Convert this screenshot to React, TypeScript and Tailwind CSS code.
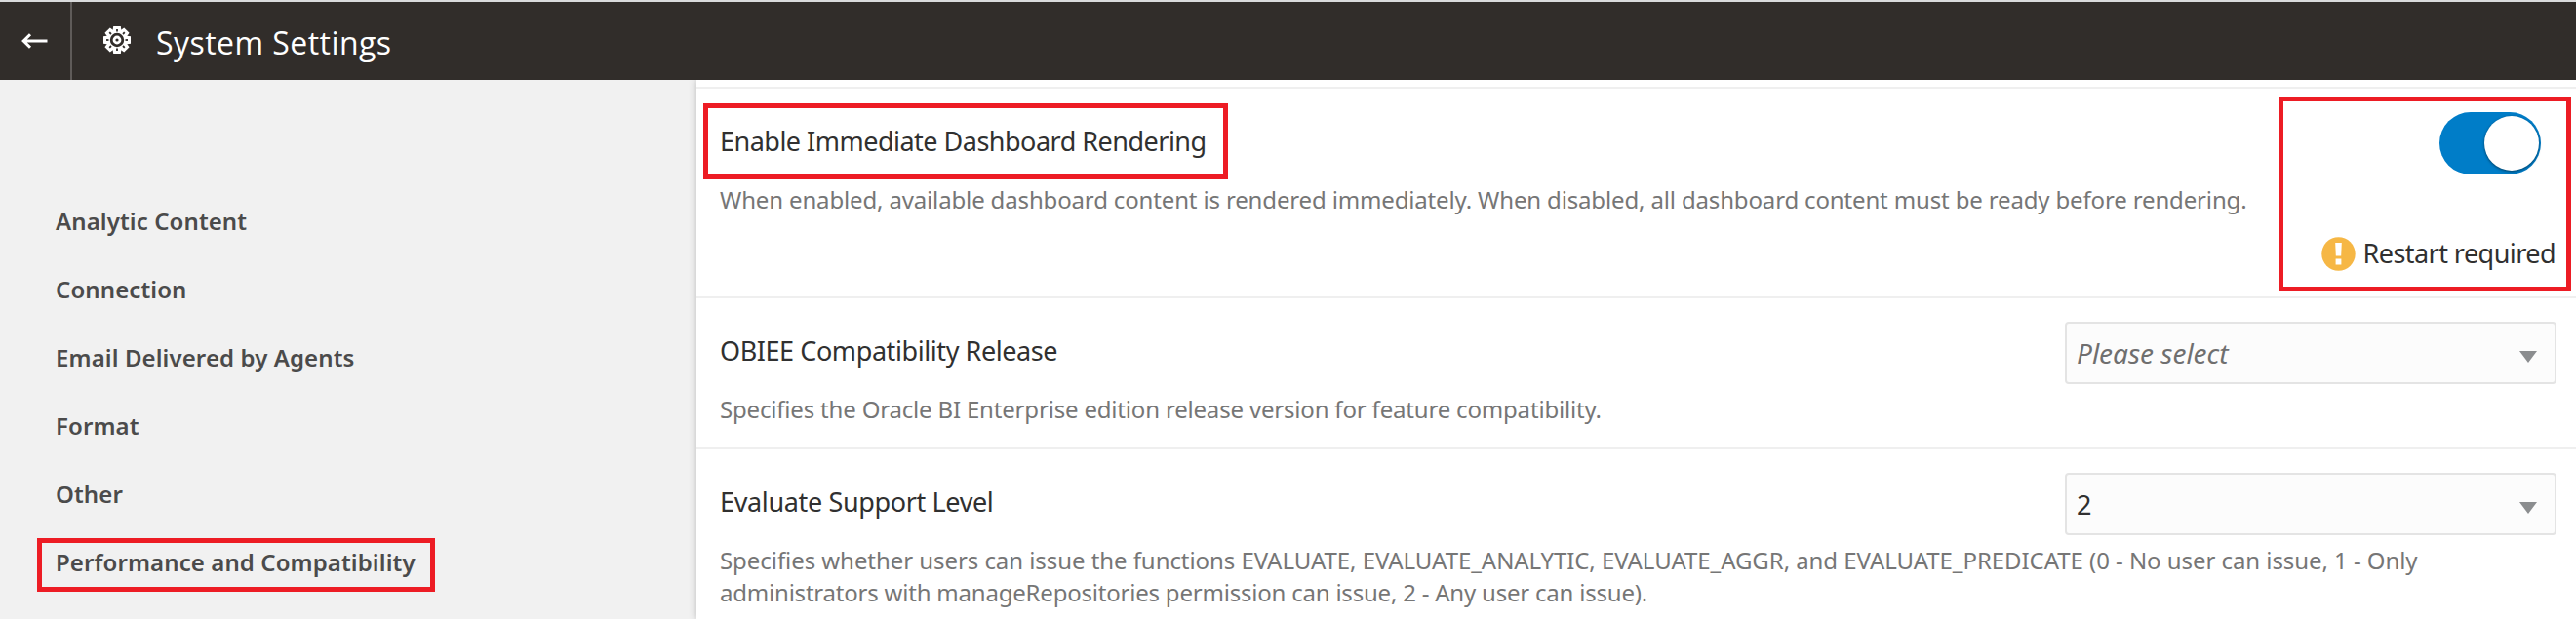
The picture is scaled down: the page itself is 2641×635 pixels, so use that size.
import type { ReactNode } from "react";

function Highlight({ className }: { className: string }) {
  return <div className={`pointer-events-none absolute border-[5px] border-[#ed1c24] ${className}`} />;
}

function Gear() {
  const angles = [0, 45, 90, 135, 180, 225, 270, 315];
  return (
    <svg className="h-7 w-7" viewBox="-14 -14 28 28" fill="none">
      {angles.map((a) => (
        <path key={a} d="M-4.6 -8.5 L-3.8 -14 H3.8 L4.6 -8.5 Z" fill="#fff" transform={`rotate(${a})`} />
      ))}
      <circle r="9" stroke="#fff" strokeWidth="3.6" />
      {angles.map((a) => (
        <path key={a} d="M-0.9 -11 H0.9 V-8.5 H-0.9 Z" fill="#312d2a" transform={`rotate(${a})`} />
      ))}
      <circle r="3" stroke="#fff" strokeWidth="2.8" />
    </svg>
  );
}

function Header() {
  return (
    <header className="flex h-[82px] shrink-0 border-t-2 border-[#d9dadb] bg-[#312d2a] text-white">
      <button className="flex w-[74px] items-center border-r-2 border-[#5f5b59] pl-[22px]">
        <svg className="h-4 w-[27px]" viewBox="0 0 27 16" fill="none" stroke="#fff" strokeWidth="3">
          <path d="M2 8H26.5M9 1.2L2.2 8L9 14.8" />
        </svg>
      </button>
      <div className="flex items-center pl-8">
        <div className="pb-0.5">
          <Gear />
        </div>
        <h1 className="pl-[26px] pt-[3px] font-['Open_Sans',sans-serif] text-[32px] leading-10 tracking-[0.45px]">System Settings</h1>
      </div>
    </header>
  );
}

const categories = ["Analytic Content", "Connection", "Email Delivered by Agents", "Format", "Other", "Performance and Compatibility"];

function Sidebar() {
  return (
    <nav className="relative w-[714px] shrink-0 bg-[#f1f1f1] pl-[57px] pt-[110px]">
      {categories.map((name) => (
        <div key={name} className="h-[70px] text-2xl leading-[70px] font-semibold tracking-[0.1px] text-[#4b4b4b]">
          {name}
        </div>
      ))}
      <Highlight className="left-[38px] top-[470px] h-[55px] w-[408px]" />
    </nav>
  );
}

function Setting({ title, titleClass, lines, height, children }: {
  title: string;
  titleClass: string;
  lines: { text: string; className: string }[];
  height: string;
  children: ReactNode;
}) {
  return (
    <section className={`relative flex justify-between border-t-2 border-[#efefef] pl-6 pr-5 ${height}`}>
      <div className="w-0 pt-9 whitespace-nowrap">
        <h2 className={`text-[27px] leading-9 text-[#303030] ${titleClass}`}>{title}</h2>
        <div className="mt-[25px] text-2xl leading-[33px] text-[#767676]">
          {lines.map((l) => (
            <p key={l.text} className={l.className}>{l.text}</p>
          ))}
        </div>
      </div>
      {children}
    </section>
  );
}

function Select({ children }: { children: ReactNode }) {
  return (
    <div className="mt-6 flex h-16 w-[504px] items-center justify-between rounded border-2 border-[#e4e4e4] bg-[#fcfcfc] pr-[18px] pl-2.5">
      {children}
      <svg className="mt-2 h-3 w-[18px]" viewBox="0 0 18 12">
        <path d="M0 0H18L9 12Z" fill="#8b8d8f" />
      </svg>
    </div>
  );
}

export default function App() {
  return (
    <div className="flex h-[635px] w-[2641px] flex-col overflow-hidden bg-white font-['Noto_Sans',sans-serif]">
      <Header />
      <div className="flex min-h-0 flex-1">
        <Sidebar />
        <main className="relative flex-1 bg-white pt-[7px] shadow-[-1px_0_7px_rgba(0,0,0,0.18)] [clip-path:inset(0_0_0_-12px)]">
          <Setting
            title="Enable Immediate Dashboard Rendering"
            titleClass="tracking-[-0.51px]"
            height="h-[215px]"
            lines={[{
              text: "When enabled, available dashboard content is rendered immediately. When disabled, all dashboard content must be ready before rendering.",
              className: "tracking-[-0.15px]",
            }]}
          >
            <div className="flex flex-col items-end">
              <div className="mt-6 mr-4 flex h-16 w-[104px] items-center justify-end rounded-full bg-[#007dc8] pr-0.5">
                <div className="h-14 w-14 rounded-full bg-white shadow-[0_1px_3px_rgba(0,0,0,0.5)]" />
              </div>
              <div className="mt-[63px] mr-px flex items-center">
                <svg className="h-[35px] w-[35px]" viewBox="0 0 35 35">
                  <circle cx="17.5" cy="17.5" r="17.2" fill="#f6b745" />
                  <path d="M14.2 6H20.8L20.2 19.5H14.8ZM14.6 22.5H20.4V28.5H14.6Z" fill="#fff" />
                </svg>
                <span className="ml-[7px] text-[27px] leading-9 tracking-[-0.55px] text-[#303030]">Restart required</span>
              </div>
            </div>
            <Highlight className="left-[7px] top-[15px] h-[78px] w-[538px]" />
            <Highlight className="right-[5px] top-2 h-[200px] w-[300px]" />
          </Setting>
          <Setting
            title="OBIEE Compatibility Release"
            titleClass="tracking-[-0.42px]"
            height="h-[155px]"
            lines={[{
              text: "Specifies the Oracle BI Enterprise edition release version for feature compatibility.",
              className: "tracking-[-0.18px]",
            }]}
          >
            <Select>
              <span className="pb-px text-[28px] leading-9 text-[#6f6f6f] italic">Please select</span>
            </Select>
          </Setting>
          <Setting
            title="Evaluate Support Level"
            titleClass="tracking-[-0.36px]"
            height="h-[176px]"
            lines={[
              {
                text: "Specifies whether users can issue the functions EVALUATE, EVALUATE_ANALYTIC, EVALUATE_AGGR, and EVALUATE_PREDICATE (0 - No user can issue, 1 - Only",
                className: "tracking-[-0.06px]",
              },
              {
                text: "administrators with manageRepositories permission can issue, 2 - Any user can issue).",
                className: "tracking-[-0.21px]",
              },
            ]}
          >
            <Select>
              <span className="pt-px text-[27px] leading-9 text-[#303030]">2</span>
            </Select>
          </Setting>
        </main>
      </div>
    </div>
  );
}
